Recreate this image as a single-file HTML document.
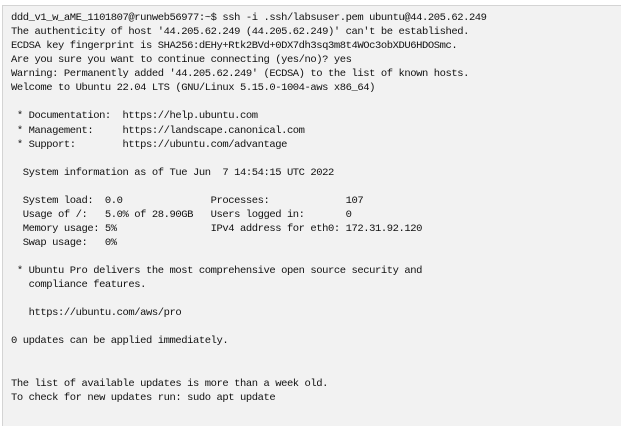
<!DOCTYPE html>
<html><head><meta charset="utf-8"><style>
html,body{margin:0;padding:0;background:#fff;width:621px;height:420px;overflow:hidden}
.t{position:absolute;left:2px;top:5px;width:640px;height:420px;background:#f2f2f2;border-top:1px solid #d4d4d4;border-left:1px solid #d4d4d4}
pre{margin:0;position:absolute;left:8px;top:5px;font-family:"Liberation Mono",monospace;font-size:10.5px;letter-spacing:-0.43px;line-height:14.07px;color:#111}
</style></head><body><div class="t"><pre>ddd_v1_w_aME_1101807@runweb56977:~$ ssh -i .ssh/labsuser.pem ubuntu@44.205.62.249
The authenticity of host '44.205.62.249 (44.205.62.249)' can't be established.
ECDSA key fingerprint is SHA256:dEHy+Rtk2BVd+0DX7dh3sq3m8t4WOc3obXDU6HDOSmc.
Are you sure you want to continue connecting (yes/no)? yes
Warning: Permanently added '44.205.62.249' (ECDSA) to the list of known hosts.
Welcome to Ubuntu 22.04 LTS (GNU/Linux 5.15.0-1004-aws x86_64)

 * Documentation:  https://help.ubuntu.com
 * Management:     https://landscape.canonical.com
 * Support:        https://ubuntu.com/advantage

  System information as of Tue Jun  7 14:54:15 UTC 2022

  System load:  0.0               Processes:             107
  Usage of /:   5.0% of 28.90GB   Users logged in:       0
  Memory usage: 5%                IPv4 address for eth0: 172.31.92.120
  Swap usage:   0%

 * Ubuntu Pro delivers the most comprehensive open source security and
   compliance features.

   https://ubuntu.com/aws/pro

0 updates can be applied immediately.


The list of available updates is more than a week old.
To check for new updates run: sudo apt update</pre></div></body></html>
